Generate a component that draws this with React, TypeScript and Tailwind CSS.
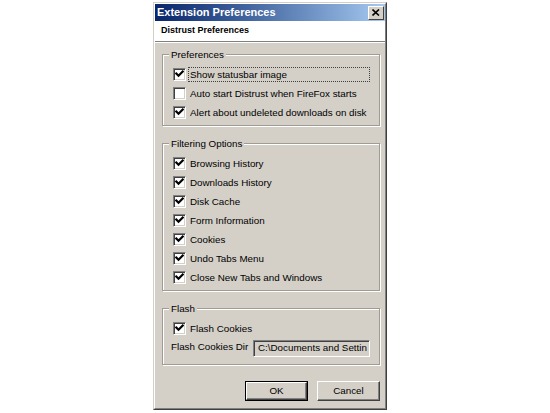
import React from 'react';

const font = { fontFamily: '"Liberation Sans", Arial, sans-serif' };

const CheckBox: React.FC<{ checked?: boolean }> = ({ checked }) => (
  <span className="flex items-center justify-center w-[13px] h-[13px] shrink-0 bg-white border border-t-[#808080] border-l-[#808080] border-r-white border-b-white shadow-[inset_1px_1px_0_#404040,inset_-1px_-1px_0_#d4d0c8]">
    {checked && (
      <svg width="9" height="9" viewBox="0 0 9 9">
        <path d="M1.3 3.6 L3.5 5.8 L7.7 1.6" fill="none" stroke="#000" strokeWidth="2.2" strokeLinecap="square" />
      </svg>
    )}
  </span>
);

const Row: React.FC<{ label: string; checked?: boolean; focused?: boolean }> = ({ label, checked, focused }) => (
  <div className="flex items-center h-[19px] pl-[10px] pr-[9px]">
    <CheckBox checked={checked} />
    <span
      className={`ml-[2px] pl-[1px] leading-[13px] ${focused ? 'flex-1 border border-dotted border-[#404040]' : 'border border-transparent'}`}
    >
      {label}
    </span>
  </div>
);

const Group: React.FC<{ title: string; className?: string; children: React.ReactNode }> = ({ title, className, children }) => (
  <div className={`relative ml-[7px] w-[218px] border border-[#a09c94] shadow-[inset_1px_1px_0_#fff,1px_1px_0_#fff] pt-[10px] ${className || ''}`}>
    {/* legend sits over the top border */}
    <span className="absolute left-[6px] -top-[7px] px-[2px] bg-[#d4d0c8] leading-[13px]">{title}</span>
    {children}
  </div>
);

const Button: React.FC<{ label: string; isDefault?: boolean }> = ({ label, isDefault }) => (
  <div className={`w-[63px] h-[20px] ${isDefault ? 'border border-black' : ''}`}>
    <div className="w-full h-full flex items-center justify-center bg-[#d4d0c8] border border-t-white border-l-white border-r-[#404040] border-b-[#404040] shadow-[inset_-1px_-1px_0_#808080]">
      {label}
    </div>
  </div>
);

export default function App() {
  return (
    <div className="w-[550px] h-[413px] bg-white pt-[2px] text-[9.8px] text-black" style={font}>
      <div className="ml-[153px] w-[234px] h-[408px] border border-t-[#d4d0c8] border-l-[#d4d0c8] border-r-[#404040] border-b-[#404040]">
        <div className="h-full border border-t-white border-l-white border-r-[#808080] border-b-[#808080] bg-[#d4d0c8] flex flex-col">
          {/* title bar */}
          <div className="h-[17px] flex items-center justify-between pl-[2px] pr-[1px] bg-gradient-to-r from-[#0a246a] to-[#a6caf0]">
            <span className="text-white font-bold text-[11px]">Extension Preferences</span>
            <div className="w-[16px] h-[14px] flex items-center justify-center bg-[#d4d0c8] border border-t-white border-l-white border-r-[#404040] border-b-[#404040]">
              <svg width="8" height="7" viewBox="0 0 8 7">
                <path d="M0.5 0.5 L7 6.5 M7 0.5 L0.5 6.5" stroke="#000" strokeWidth="1.6" />
              </svg>
            </div>
          </div>
          {/* header */}
          <div className="h-[21px] bg-white flex items-center pl-[6px] border-b border-[#808080] shadow-[0_1px_0_#fff] text-[9px] font-semibold">
            Distrust Preferences
          </div>

          <Group title="Preferences" className="mt-[12px] pb-[3px]">
            <Row label="Show statusbar image" checked focused />
            <Row label="Auto start Distrust when FireFox starts" />
            <Row label="Alert about undeleted downloads on disk" checked />
          </Group>

          <Group title="Filtering Options" className="mt-[17px] pb-[3px]">
            <Row label="Browsing History" checked />
            <Row label="Downloads History" checked />
            <Row label="Disk Cache" checked />
            <Row label="Form Information" checked />
            <Row label="Cookies" checked />
            <Row label="Undo Tabs Menu" checked />
            <Row label="Close New Tabs and Windows" checked />
          </Group>

          <Group title="Flash" className="mt-[17px] pb-[8px]">
            <Row label="Flash Cookies" checked />
            <div className="flex items-center h-[18px] pl-[8px]">
              <span className="w-[82px]">Flash Cookies Dir</span>
              <div className="w-[117px] h-[17px] mt-[2px] flex items-center pl-[4px] whitespace-nowrap bg-[#d4d0c8] border border-t-[#808080] border-l-[#808080] border-r-white border-b-white shadow-[inset_1px_1px_0_#404040]">
                C:\Documents and Settin
              </div>
            </div>
          </Group>

          <div className="flex justify-end gap-[9px] pr-[5px] mt-[16px]">
            <Button label="OK" isDefault />
            <Button label="Cancel" />
          </div>
        </div>
      </div>
    </div>
  );
}
